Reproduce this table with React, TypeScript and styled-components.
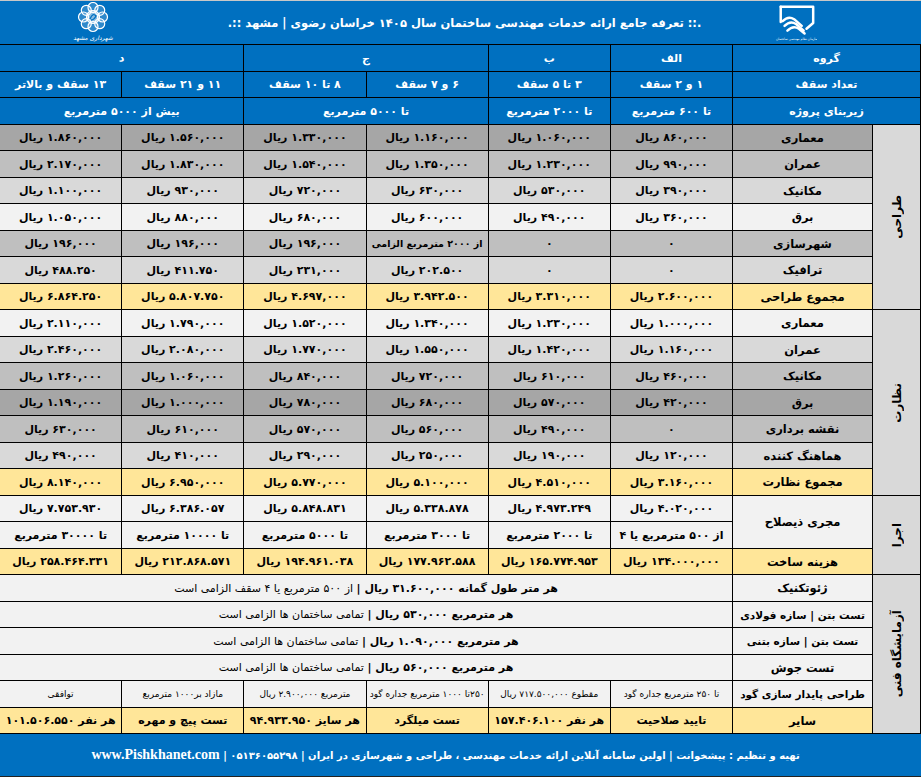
import React from 'react';
import styled, { createGlobalStyle } from 'styled-components';

const Global = createGlobalStyle`
  html, body { margin: 0; padding: 0; background: #ffffff; }
  body { font-family: "DejaVu Sans", sans-serif; }
  * { box-sizing: border-box; }
`;

const BLUE = '#0070c0';
const G1 = '#a6a6a6';
const G2 = '#bfbfbf';
const G3 = '#d9d9d9';
const G4 = '#f2f2f2';
const GOLD = '#ffe699';

const Page = styled.div`
  width: 921px;
  height: 779px;
  direction: rtl;
  display: flex;
  flex-direction: column;
  font-family: "DejaVu Sans", sans-serif;
  border-top: 1px solid #c8c8c8;
`;

const Banner = styled.header`
  height: 43px;
  background: ${BLUE};
  display: flex;
  align-items: center;
  padding: 0 104px 0 72px;
`;

const LogoSlot = styled.div`
  width: 42px;
  height: 42px;
  display: flex;
  align-items: center;
  justify-content: center;
  flex: none;
`;

const BannerTitle = styled.h1`
  flex: 1;
  margin: 0;
  padding-left: 40px;
  text-align: center;
  color: #ffffff;
  font-size: 11.5px;
  font-weight: bold;
  white-space: nowrap;
`;

const Sheet = styled.div`
  display: grid;
  grid-template-columns: 47px 139px repeat(6, 1fr);
  grid-template-rows: repeat(13, 26px 25px);
  gap: 1px;
  padding: 1px 1px 1px 0;
  background: #000000;
`;

const HeadCell = styled.div<{ $span?: number }>`
  grid-column: span ${(p) => p.$span ?? 1};
  background: ${BLUE};
  color: #ffffff;
  display: flex;
  align-items: center;
  justify-content: center;
  font-size: 11px;
  font-weight: bold;
  white-space: nowrap;
`;

const SideCell = styled.div<{ $rows: number }>`
  grid-row: span ${(p) => p.$rows};
  background: ${G3};
  display: flex;
  align-items: center;
  justify-content: center;
`;

const SideText = styled.span`
  writing-mode: vertical-rl;
  transform: rotate(180deg);
  font-size: 12px;
  font-weight: bold;
  color: #000000;
  white-space: nowrap;
`;

const LabelCell = styled.div<{ $bg: string; $rows?: number; $tight?: boolean }>`
  grid-row: span ${(p) => p.$rows ?? 1};
  background: ${(p) => p.$bg};
  display: flex;
  align-items: center;
  justify-content: center;
  font-size: ${(p) => (p.$tight ? '10.5px' : '11.5px')};
  font-weight: bold;
  color: #000000;
  white-space: nowrap;
  overflow: hidden;
`;

const ValueCell = styled.div<{ $bg: string; $span?: number; $small?: boolean; $tight?: boolean }>`
  grid-column: span ${(p) => p.$span ?? 1};
  background: ${(p) => p.$bg};
  display: flex;
  align-items: center;
  justify-content: center;
  font-size: ${(p) => (p.$small ? '9px' : p.$tight ? '9.5px' : '11px')};
  font-weight: ${(p) => (p.$small ? 'normal' : 'bold')};
  color: #000000;
  white-space: nowrap;
  overflow: hidden;
`;

const Strong = styled.span`
  font-weight: bold;
`;

const Light = styled.span`
  font-weight: normal;
`;

const Footer = styled.footer`
  height: 43px;
  background: ${BLUE};
  border-bottom: 1px solid #222222;
  display: flex;
  align-items: center;
  justify-content: center;
  padding-right: 30px;
  color: #ffffff;
  font-size: 10px;
  font-weight: bold;
  white-space: nowrap;
`;

const Url = styled.span`
  font-family: "Liberation Serif", serif;
  font-size: 14px;
  font-weight: bold;
`;

const R = (n: string) => `${n} ریال`;

type Row = { label: string; bg: string; values: string[] };

const design: Row[] = [
  { label: 'معماری', bg: G1, values: ['۸۶۰,۰۰۰', '۱.۰۶۰,۰۰۰', '۱.۱۶۰,۰۰۰', '۱.۳۳۰,۰۰۰', '۱.۵۶۰,۰۰۰', '۱.۸۶۰,۰۰۰'].map(R) },
  { label: 'عمران', bg: G2, values: ['۹۹۰,۰۰۰', '۱.۲۳۰,۰۰۰', '۱.۳۵۰,۰۰۰', '۱.۵۴۰,۰۰۰', '۱.۸۳۰,۰۰۰', '۲.۱۷۰,۰۰۰'].map(R) },
  { label: 'مکانیک', bg: G3, values: ['۳۹۰,۰۰۰', '۵۳۰,۰۰۰', '۶۳۰,۰۰۰', '۷۲۰,۰۰۰', '۹۳۰,۰۰۰', '۱.۱۰۰,۰۰۰'].map(R) },
  { label: 'برق', bg: G4, values: ['۳۶۰,۰۰۰', '۴۹۰,۰۰۰', '۶۰۰,۰۰۰', '۶۸۰,۰۰۰', '۸۸۰,۰۰۰', '۱.۰۵۰,۰۰۰'].map(R) },
  { label: 'شهرسازی', bg: G2, values: ['۰', '۰', 'از ۲۰۰۰ مترمربع الزامی', R('۱۹۶,۰۰۰'), R('۱۹۶,۰۰۰'), R('۱۹۶,۰۰۰')] },
  { label: 'ترافیک', bg: G3, values: ['۰', '۰', R('۲۰۲.۵۰۰'), R('۲۳۱,۰۰۰'), R('۴۱۱.۷۵۰'), R('۴۸۸.۲۵۰')] },
  { label: 'مجموع طراحی', bg: GOLD, values: ['۲.۶۰۰,۰۰۰', '۳.۳۱۰,۰۰۰', '۳.۹۴۲.۵۰۰', '۴.۶۹۷,۰۰۰', '۵.۸۰۷.۷۵۰', '۶.۸۶۴.۲۵۰'].map(R) },
];

const supervision: Row[] = [
  { label: 'معماری', bg: G4, values: ['۱.۰۰۰,۰۰۰', '۱.۲۳۰,۰۰۰', '۱.۳۴۰,۰۰۰', '۱.۵۲۰,۰۰۰', '۱.۷۹۰,۰۰۰', '۲.۱۱۰,۰۰۰'].map(R) },
  { label: 'عمران', bg: G3, values: ['۱.۱۶۰,۰۰۰', '۱.۴۲۰,۰۰۰', '۱.۵۵۰,۰۰۰', '۱.۷۷۰,۰۰۰', '۲.۰۸۰,۰۰۰', '۲.۴۶۰,۰۰۰'].map(R) },
  { label: 'مکانیک', bg: G2, values: ['۴۶۰,۰۰۰', '۶۱۰,۰۰۰', '۷۲۰,۰۰۰', '۸۴۰,۰۰۰', '۱.۰۶۰,۰۰۰', '۱.۲۶۰,۰۰۰'].map(R) },
  { label: 'برق', bg: G1, values: ['۴۲۰,۰۰۰', '۵۷۰,۰۰۰', '۶۸۰,۰۰۰', '۷۸۰,۰۰۰', '۱.۰۰۰,۰۰۰', '۱.۱۹۰,۰۰۰'].map(R) },
  { label: 'نقشه برداری', bg: G2, values: ['۰', R('۴۹۰,۰۰۰'), R('۵۶۰,۰۰۰'), R('۵۷۰,۰۰۰'), R('۶۱۰,۰۰۰'), R('۶۳۰,۰۰۰')] },
  { label: 'هماهنگ کننده', bg: G3, values: ['۱۲۰,۰۰۰', '۱۹۰,۰۰۰', '۲۵۰,۰۰۰', '۲۹۰,۰۰۰', '۴۱۰,۰۰۰', '۴۹۰,۰۰۰'].map(R) },
  { label: 'مجموع نظارت', bg: GOLD, values: ['۳.۱۶۰,۰۰۰', '۴.۵۱۰,۰۰۰', '۵.۱۰۰,۰۰۰', '۵.۷۷۰,۰۰۰', '۶.۹۵۰,۰۰۰', '۸.۱۴۰,۰۰۰'].map(R) },
];

const executorFees = ['۴.۰۲۰,۰۰۰', '۴.۹۷۳.۲۴۹', '۵.۳۳۸.۸۷۸', '۵.۸۴۸.۸۳۱', '۶.۳۸۶.۰۵۷', '۷.۷۵۳.۹۳۰'].map(R);
const executorAreas = ['از ۵۰۰ مترمربع یا ۴', 'تا ۲۰۰۰ مترمربع', 'تا ۳۰۰۰ مترمربع', 'تا ۵۰۰۰ مترمربع', 'تا ۱۰۰۰۰ مترمربع', 'تا ۳۰۰۰۰ مترمربع'];
const buildCost = ['۱۳۴.۰۰۰,۰۰۰', '۱۶۵.۷۷۴.۹۵۳', '۱۷۷.۹۶۲.۵۸۸', '۱۹۴.۹۶۱.۰۳۸', '۲۱۲.۸۶۸.۵۷۱', '۲۵۸.۴۶۴.۳۳۱'].map(R);

const labNotes: { label: string; strong: string; light: string; tight?: boolean }[] = [
  { label: 'ژئوتکنیک', strong: 'هر متر طول گمانه ۳۱.۶۰۰,۰۰۰ ریال', light: 'از ۵۰۰ مترمربع یا ۴ سقف الزامی است' },
  { label: 'تست بتن | سازه فولادی', strong: 'هر مترمربع ۵۳۰,۰۰۰ ریال', light: 'تمامی ساختمان ها الزامی است', tight: true },
  { label: 'تست بتن | سازه بتنی', strong: 'هر مترمربع ۱.۰۹۰,۰۰۰ ریال', light: 'تمامی ساختمان ها الزامی است', tight: true },
  { label: 'تست جوش', strong: 'هر مترمربع ۵۶۰,۰۰۰ ریال', light: 'تمامی ساختمان ها الزامی است' },
];

const pitRow = ['تا ۲۵۰ مترمربع جداره گود', 'مقطوع ۷۱۷.۵۰۰,۰۰۰ ریال', '۲۵۰تا ۱۰۰۰ مترمربع جداره گود', 'مترمربع ۲.۹۰۰,۰۰۰ ریال', 'مازاد بر۱۰۰۰ مترمربع', 'توافقی'];
const otherRow = ['تایید صلاحیت', 'هر نفر ۱۵۷.۴۰۶.۱۰۰', 'تست میلگرد', 'هر سایز ۹۴.۹۳۳.۹۵۰', 'تست پیچ و مهره', 'هر نفر ۱۰۱.۵۰۶.۵۵۰'];

const EngineeringLogo = () => (
  <svg width="44" height="42" viewBox="0 0 44 42">
    <g fill="none" stroke="#ffffff" strokeWidth="2.6" strokeLinecap="round" strokeLinejoin="round">
      <path d="M6 4 H40 V21 L33 27" />
      <path d="M6 4 V20" />
      <path d="M8 19 Q14 13 20 17 L28 24" />
      <path d="M10 24 Q16 18 22 22 L30 29" />
      <path d="M13 29 Q19 23 25 27 L31 32" />
    </g>
    <text x="23" y="39" fontSize="3.3" fill="#ffffff" textAnchor="middle" fontFamily="DejaVu Sans">
      سازمان نظام مهندسی ساختمان
    </text>
  </svg>
);

const MashhadLogo = () => {
  const petals = Array.from({ length: 8 }, (_, i) => {
    const a = (i * Math.PI) / 4;
    return { x: 21 + Math.cos(a) * 9.5, y: 15 + Math.sin(a) * 9.5 };
  });
  return (
    <svg width="42" height="42" viewBox="0 0 42 42">
      <g fill="rgba(255,255,255,0.18)" stroke="#ffffff" strokeWidth="1.2">
        {petals.map((p, i) => (
          <circle key={i} cx={p.x} cy={p.y} r="5" />
        ))}
        <circle cx="21" cy="15" r="6.5" fill="rgba(255,255,255,0.55)" />
      </g>
      <path d="M18 17 Q21 10 24 14 Q22 18 19 18" fill="none" stroke="#0070c0" strokeWidth="1.3" />
      <text x="21" y="38" fontSize="6" fill="#ffffff" textAnchor="middle" fontFamily="DejaVu Sans" fontStyle="italic">
        شهرداری مشهد
      </text>
    </svg>
  );
};

const Section = ({ title, rows }: { title: string; rows: Row[] }) => (
  <>
    <SideCell $rows={rows.length}>
      <SideText>{title}</SideText>
    </SideCell>
    {rows.map((r, i) => (
      <React.Fragment key={i}>
        <LabelCell $bg={r.bg}>{r.label}</LabelCell>
        {r.values.map((v, j) => (
          <ValueCell key={j} $bg={r.bg} $tight={v.length > 16}>
            {v}
          </ValueCell>
        ))}
      </React.Fragment>
    ))}
  </>
);

export default function App() {
  return (
    <>
      <Global />
      <Page>
        <Banner>
          <LogoSlot>
            <EngineeringLogo />
          </LogoSlot>
          <BannerTitle>.:: تعرفه جامع ارائه خدمات مهندسی ساختمان سال ۱۴۰۵ خراسان رضوی | مشهد ::.</BannerTitle>
          <LogoSlot>
            <MashhadLogo />
          </LogoSlot>
        </Banner>

        <Sheet>
          <HeadCell $span={2}>گروه</HeadCell>
          <HeadCell>الف</HeadCell>
          <HeadCell>ب</HeadCell>
          <HeadCell $span={2}>ج</HeadCell>
          <HeadCell $span={2}>د</HeadCell>

          <HeadCell $span={2}>تعداد سقف</HeadCell>
          <HeadCell>۱ و ۲ سقف</HeadCell>
          <HeadCell>۳ تا ۵ سقف</HeadCell>
          <HeadCell>۶ و ۷ سقف</HeadCell>
          <HeadCell>۸ تا ۱۰ سقف</HeadCell>
          <HeadCell>۱۱ و ۲۱ سقف</HeadCell>
          <HeadCell>۱۳ سقف و بالاتر</HeadCell>

          <HeadCell $span={2}>زیربنای پروژه</HeadCell>
          <HeadCell>تا ۶۰۰ مترمربع</HeadCell>
          <HeadCell>تا ۲۰۰۰ مترمربع</HeadCell>
          <HeadCell $span={2}>تا ۵۰۰۰ مترمربع</HeadCell>
          <HeadCell $span={2}>بیش از ۵۰۰۰ مترمربع</HeadCell>

          <Section title="طراحی" rows={design} />
          <Section title="نظارت" rows={supervision} />

          <SideCell $rows={3}>
            <SideText>اجرا</SideText>
          </SideCell>
          <LabelCell $bg={G4} $rows={2}>مجری ذیصلاح</LabelCell>
          {executorFees.map((v, i) => (
            <ValueCell key={`f${i}`} $bg={G4}>{v}</ValueCell>
          ))}
          {executorAreas.map((v, i) => (
            <ValueCell key={`a${i}`} $bg={G4}>{v}</ValueCell>
          ))}
          <LabelCell $bg={GOLD}>هزینه ساخت</LabelCell>
          {buildCost.map((v, i) => (
            <ValueCell key={`c${i}`} $bg={GOLD}>{v}</ValueCell>
          ))}

          <SideCell $rows={6}>
            <SideText>آزمایشگاه فنی</SideText>
          </SideCell>
          {labNotes.map((n, i) => (
            <React.Fragment key={`n${i}`}>
              <LabelCell $bg={G4} $tight={n.tight}>{n.label}</LabelCell>
              <ValueCell $bg={G4} $span={6}>
                <Strong>{n.strong} | </Strong>
                <Light>&nbsp;{n.light}</Light>
              </ValueCell>
            </React.Fragment>
          ))}
          <LabelCell $bg={G4} $tight>طراحی پایدار سازی گود</LabelCell>
          {pitRow.map((v, i) => (
            <ValueCell key={`p${i}`} $bg={G4} $small>{v}</ValueCell>
          ))}
          <LabelCell $bg={GOLD}>سایر</LabelCell>
          {otherRow.map((v, i) => (
            <ValueCell key={`o${i}`} $bg={GOLD}>{v}</ValueCell>
          ))}
        </Sheet>

        <Footer>
          تهیه و تنظیم : پیشخوانت | اولین سامانه آنلاین ارائه خدمات مهندسی ، طراحی و شهرسازی در ایران | ۰۵۱۳۶۰۵۵۲۹۸ |&nbsp;
          <Url>www.Pishkhanet.com</Url>
        </Footer>
      </Page>
    </>
  );
}
